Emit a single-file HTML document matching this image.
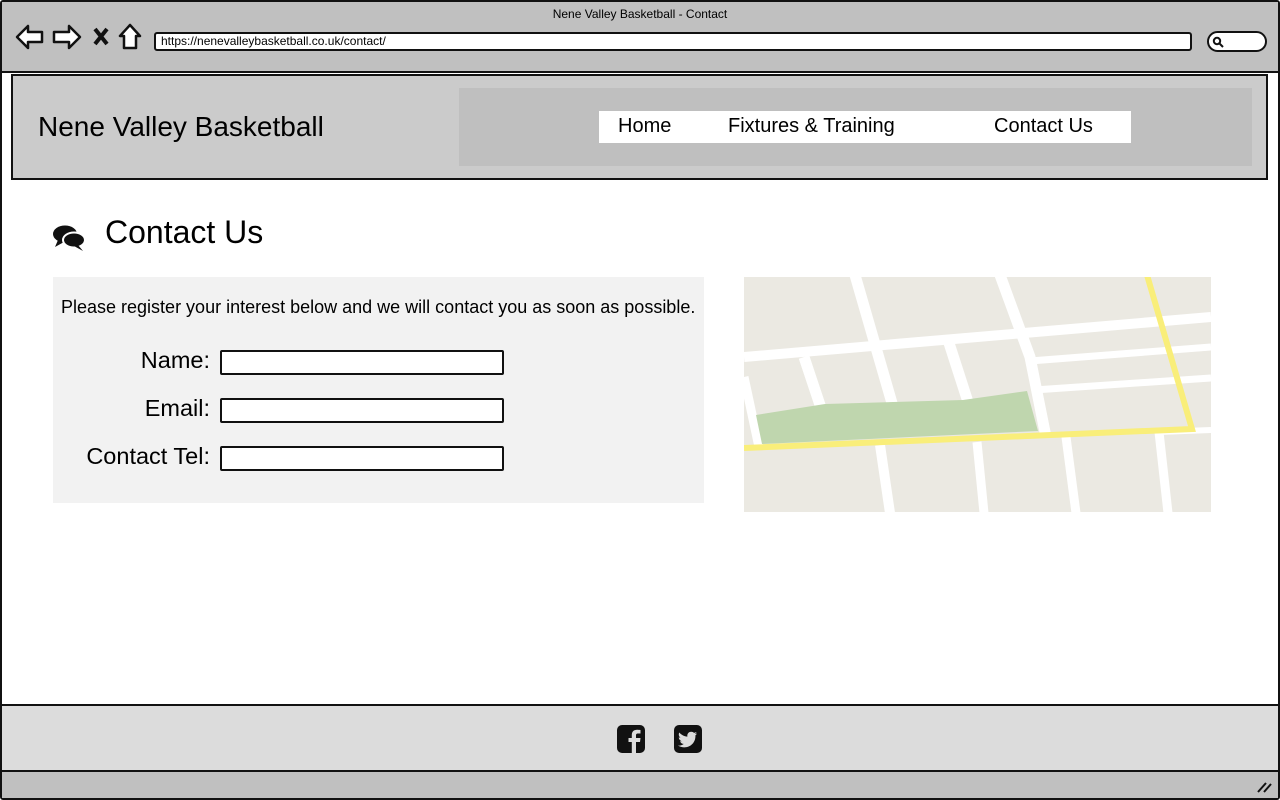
<!DOCTYPE html>
<html><head><meta charset="utf-8"><style>
*{box-sizing:border-box;margin:0;padding:0}
body{width:1280px;height:800px;overflow:hidden;background:#fff;font-family:"Liberation Sans",sans-serif;color:#000;position:relative}
.abs{position:absolute}
</style></head><body>
<div class="abs" style="left:0;top:0;width:1280px;height:800px;border:2px solid #111;border-radius:3px"></div>
<div class="abs" style="left:2px;top:2px;width:1276px;height:71px;background:#c0c0c0;border-bottom:2px solid #111"></div>
<div class="abs" style="left:0;top:7px;width:1280px;text-align:center;font-size:12px">Nene Valley Basketball - Contact</div>
<svg class="abs" style="left:14px;top:22px" width="132" height="30" viewBox="0 0 132 30">
<path d="M3 15 L14 4 L14 10 L28 10 L28 20 L14 20 L14 26 Z" fill="#fff" stroke="#111" stroke-width="2.5" stroke-linejoin="round"/>
<path d="M66 15 L55 4 L55 10 L40 10 L40 20 L55 20 L55 26 Z" fill="#fff" stroke="#111" stroke-width="2.5" stroke-linejoin="round"/>
<path d="M81 7 L93 22 M93 7 L81 22" stroke="#111" stroke-width="4"/>
<path d="M116 3 L106 14 L110 14 L110 26 L122 26 L122 14 L126 14 Z" fill="#fff" stroke="#111" stroke-width="2.5" stroke-linejoin="round"/>
</svg>
<div class="abs" style="left:154px;top:32px;width:1038px;height:19px;background:#fff;border:2px solid #111;border-radius:3px;font-size:12px;line-height:15px;padding-left:5px">https://nenevalleybasketball.co.uk/contact/</div>
<div class="abs" style="left:1207px;top:31px;width:60px;height:21px;background:#fff;border:2px solid #111;border-radius:11px"></div>
<svg class="abs" style="left:1212px;top:36px" width="12" height="12"><circle cx="5" cy="5" r="3.2" fill="none" stroke="#111" stroke-width="2"/><path d="M7.5 7.5 L11 11" stroke="#111" stroke-width="2"/></svg>
<div class="abs" style="left:11px;top:74px;width:1257px;height:106px;background:#cbcbcb;border:2px solid #111"></div>
<div class="abs" style="left:38px;top:111px;font-size:28px">Nene Valley Basketball</div>
<div class="abs" style="left:459px;top:88px;width:793px;height:78px;background:#bfbfbf"></div>
<div class="abs" style="left:599px;top:111px;width:532px;height:32px;background:#fff;font-size:20px;line-height:30px">
<span class="abs" style="left:19px">Home</span><span class="abs" style="left:129px">Fixtures &amp; Training</span><span class="abs" style="left:395px">Contact Us</span></div>
<svg class="abs" style="left:52px;top:223px" width="34" height="28" viewBox="0 0 34 28">
<ellipse cx="13" cy="11" rx="12" ry="8.5" fill="#111"/><path d="M6 17 L3 24 L12 19Z" fill="#111"/>
<ellipse cx="22" cy="17" rx="11" ry="7.5" fill="#111" stroke="#fff" stroke-width="2"/><path d="M26 22 L31 28 L22 23Z" fill="#111"/></svg>
<div class="abs" style="left:105px;top:214px;font-size:32px">Contact Us</div>
<div class="abs" style="left:53px;top:277px;width:651px;height:226px;background:#f2f2f2"></div>
<div class="abs" style="left:61px;top:297px;font-size:18px">Please register your interest below and we will contact you as soon as possible.</div>
<div class="abs" style="left:40px;top:347px;width:170px;text-align:right;font-size:23.5px">Name:</div>
<div class="abs" style="left:40px;top:395px;width:170px;text-align:right;font-size:23.5px">Email:</div>
<div class="abs" style="left:40px;top:443px;width:170px;text-align:right;font-size:23.5px">Contact Tel:</div>
<div class="abs" style="left:220px;top:350px;width:284px;height:25px;background:#fff;border:2px solid #111;border-radius:2px"></div>
<div class="abs" style="left:220px;top:398px;width:284px;height:25px;background:#fff;border:2px solid #111;border-radius:2px"></div>
<div class="abs" style="left:220px;top:446px;width:284px;height:25px;background:#fff;border:2px solid #111;border-radius:2px"></div>
<svg class="abs" style="left:744px;top:277px" width="467" height="235" viewBox="0 0 467 235">
<rect width="467" height="235" fill="#ebe9e2"/>
<g stroke="#fff" fill="none">
<path d="M111 -2 L152 140" stroke-width="11"/>
<path d="M256 -2 L286 80 L302 160" stroke-width="11"/>
<path d="M0 80 L467 40" stroke-width="10"/>
<path d="M286 84 L467 70" stroke-width="7"/>
<path d="M290 113 L467 101" stroke-width="7"/>
<path d="M415 155 L467 153" stroke-width="6"/>
<path d="M60 80 L80 140" stroke-width="11"/>
<path d="M205 66 L224 125" stroke-width="11"/>
<path d="M0 100 L15 170" stroke-width="9"/>
<path d="M136 168 L146 236" stroke-width="10"/>
<path d="M233 165 L240 236" stroke-width="9"/>
<path d="M322 160 L332 236" stroke-width="9"/>
<path d="M415 155 L424 236" stroke-width="9"/>
</g>
<path d="M12 138 L81 127 L219 123 L283 114 L294 154 L18 167Z" fill="#bfd6ae"/>
<path d="M0 171 L448 152 L403 -2" stroke="#f9ee7a" stroke-width="6" fill="none"/>
</svg>
<div class="abs" style="left:2px;top:704px;width:1276px;height:68px;background:#dcdcdc;border-top:2px solid #111;border-bottom:2px solid #111"></div>
<svg class="abs" style="left:616px;top:724px" width="30" height="30" viewBox="0 0 30 30"><rect x="1" y="1" width="28" height="28" rx="5" fill="#111"/><path d="M20 29 V18 H24 L24.5 14 H20 V11.5 C20 10 20.5 9.5 22 9.5 H24.5 V6 C23.5 5.9 22 5.8 21 5.8 C17.5 5.8 15.8 7.8 15.8 11 V14 H12.5 V18 H15.8 V29Z" fill="#dcdcdc"/></svg>
<svg class="abs" style="left:673px;top:724px" width="30" height="30" viewBox="0 0 30 30"><rect x="1" y="1" width="28" height="28" rx="5" fill="#111"/><path d="M24 9.5 C23.3 9.8 22.6 10 21.8 10.1 C22.6 9.6 23.2 8.9 23.5 8 C22.7 8.4 21.9 8.8 21 8.9 C19.5 7.3 16.9 7.3 15.4 8.9 C14.4 9.9 14.1 11.3 14.4 12.6 C11.2 12.4 8.3 10.9 6.3 8.5 C5.3 10.3 5.8 12.6 7.5 13.7 C6.9 13.7 6.3 13.5 5.8 13.2 C5.8 15.1 7.1 16.7 8.9 17.1 C8.3 17.3 7.7 17.3 7.1 17.2 C7.6 18.8 9.1 19.9 10.8 19.9 C9.2 21.2 7.1 21.8 5 21.5 C12.9 26.5 23 21 22.4 11.4 C23 10.9 23.6 10.3 24 9.5Z" fill="#dcdcdc"/></svg>
<div class="abs" style="left:2px;top:772px;width:1276px;height:26px;background:#c0c0c0"></div>
<svg class="abs" style="left:1256px;top:780px" width="16" height="14"><path d="M2 12 L10 3 M8 12 L15 4" stroke="#111" stroke-width="2"/></svg>
</body></html>
